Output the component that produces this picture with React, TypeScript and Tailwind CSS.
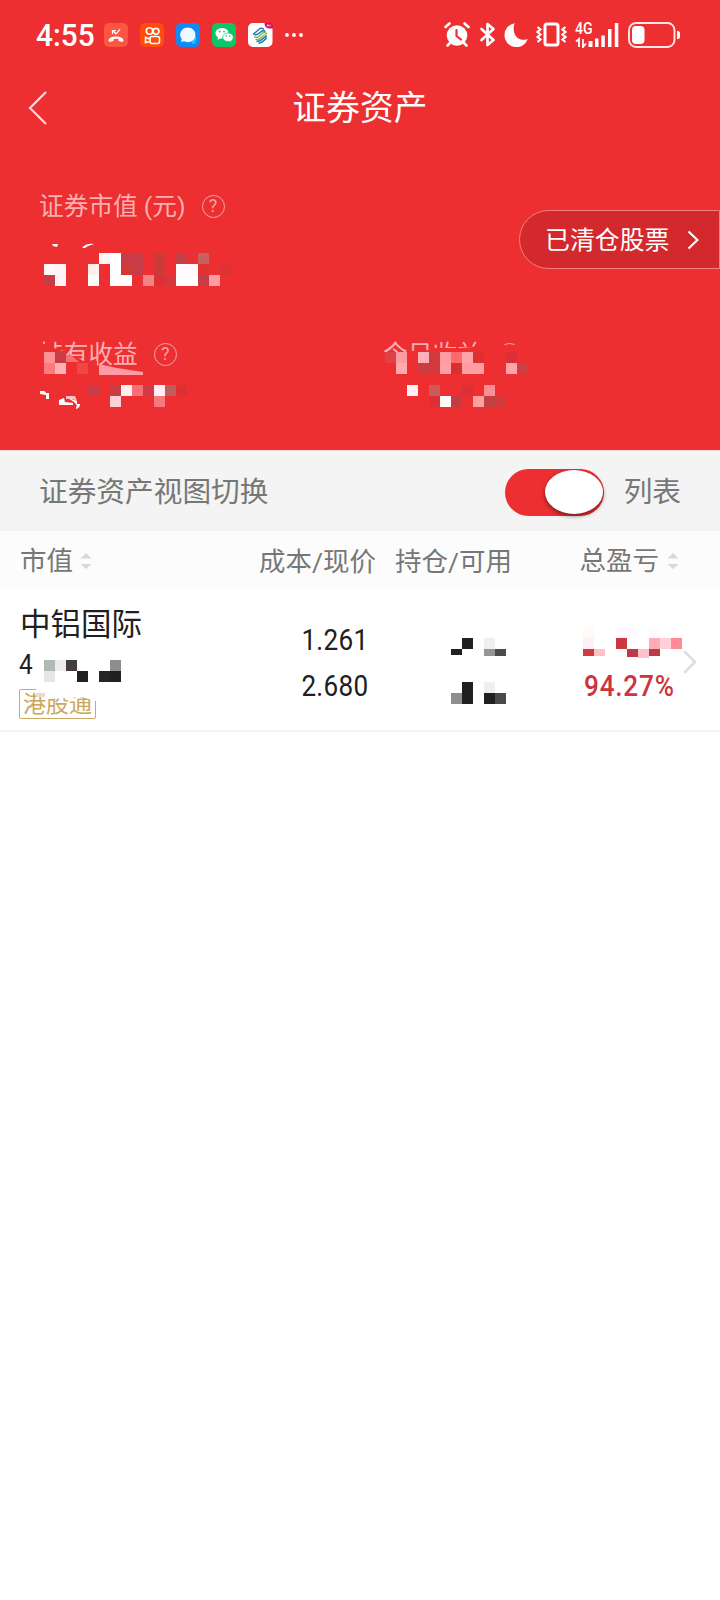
import { ChevronRight } from "lucide-react";

type Cell = [x: number, y: number, color: string, h?: number];

const marketValue: Cell[] = [
  [5, 0, "#fff3f5"], [6, 0, "#ffffff"], [7, 0, "#c73c46"], [8, 0, "#c73c46"], [10, 0, "#cc3a3a"], [12, 0, "#c53d45"], [14, 0, "#c96060"],
  [0, 1, "#fffaf8"], [1, 1, "#fff3f8"], [4, 1, "#fff0ee"], [6, 1, "#ffffff"], [7, 1, "#d23a3a"], [8, 1, "#c73c46"], [10, 1, "#cc3a3a"], [12, 1, "#fff8fc"], [13, 1, "#fff8fc"], [14, 1, "#df3333"], [16, 1, "#dc3434"],
  [0, 2, "#c73c46"], [1, 2, "#fff3f8"], [4, 2, "#fffff8"], [6, 2, "#ffffff"], [7, 2, "#ffffff"], [9, 2, "#f28488"], [10, 2, "#dc3033"], [11, 2, "#d6373c"], [12, 2, "#ffffff"], [13, 2, "#ffffff"], [14, 2, "#c73c46"], [15, 2, "#ff9ca0"],
];

const holdingLabel: Cell[] = [
  [0, 0, "#ff9095"], [1, 0, "#c73c46"],
  [0, 1, "#ff7a80"], [1, 1, "#ffb0b0"], [3, 1, "#f24545"],
];

const holdingProfit: Cell[] = [
  [4, 0, "#c73c46"], [6, 0, "#c73c46"], [7, 0, "#fff0f0"], [8, 0, "#f57078"], [9, 0, "#d23a45"], [10, 0, "#ffeef5"], [11, 0, "#c25c5c"], [12, 0, "#dc3035"],
  [6, 1, "#ffd0d8"], [10, 1, "#f57a80"],
];

const todayLabel: Cell[] = [
  [0, 0, "#e04048"], [1, 0, "#ff9ca0"], [3, 0, "#ffb0b8"], [4, 0, "#d23a3a"], [5, 0, "#ff9ca4"], [6, 0, "#ff6a6c"], [7, 0, "#ffa5aa"], [8, 0, "#dc3035"], [11, 0, "#dc3038"],
  [1, 1, "#ffaab0"], [3, 1, "#cc3c42"], [4, 1, "#d03a3a"], [5, 1, "#ffa0a8"], [6, 1, "#dc3030"], [7, 1, "#ff9ca4"], [8, 1, "#ff9ca4"], [11, 1, "#ffa5aa"], [12, 1, "#cc4040"],
];

const todayProfit: Cell[] = [
  [2, 0, "#fff0f5"], [4, 0, "#cc5a5a"], [7, 0, "#dc3038"], [9, 0, "#f79095"],
  [4, 1, "#dc3035"], [5, 1, "#fffaf8"], [6, 1, "#c73c42"], [8, 1, "#ffa0a0"], [9, 1, "#c24040"], [10, 1, "#d03a3a"],
];

const stockValue: Cell[] = [
  [0, 0, "#b2b8b2"], [1, 0, "#ececec"], [2, 0, "#453c42"], [6, 0, "#8c8f8c"],
  [0, 1, "#e6e6e6"], [3, 1, "#202020"], [5, 1, "#28242a"], [6, 1, "#202020"],
];

const holdAmount: Cell[] = [
  [1, 0, "#202020"], [3, 0, "#efefef"],
  [0, 1, "#202020", 6], [3, 1, "#959795", 7], [4, 1, "#4a4c4a", 7],
];

const availableAmount: Cell[] = [
  [1, 0, "#202020"], [3, 0, "#efefef"],
  [0, 1, "#8c8f8c"], [1, 1, "#202020"], [3, 1, "#202020"], [4, 1, "#4a4a4a"],
];

const profitAmount: Cell[] = [
  [0, 0, "#fffaf5"], [3, 0, "#fffaff"], [4, 0, "#fffaff"], [6, 0, "#fffaff"],
  [0, 1, "#fff0f8"], [3, 1, "#cc3842"], [6, 1, "#ffacb4"], [7, 1, "#ffd0d8"], [8, 1, "#ff8c94"],
  [0, 2, "#d23840", 7], [1, 2, "#ffc0c8", 7], [4, 2, "#b83c4a", 8], [5, 2, "#ffc0c8", 9], [6, 2, "#b83c4a", 7],
];

// Censored number, drawn as 11px blocks
const Mosaic = ({ cells, cols, rows = 2 }: { cells: Cell[]; cols: number; rows?: number }) => (
  <svg width={cols * 11} height={rows * 11} className="block shrink-0" shapeRendering="crispEdges">
    {cells.map(([x, y, color, h = 11]) => (
      <rect key={`${x}-${y}`} x={x * 11} y={y * 11} width="11" height={h} fill={color} />
    ))}
  </svg>
);

const Help = () => (
  <span className="flex h-[23px] w-[23px] items-center justify-center rounded-full border-[1.5px] border-[#f9a3a5] text-[18px] leading-none text-[#f9a3a5]">
    ?
  </span>
);

const Sorter = () => (
  <svg width="12" height="18" viewBox="0 0 12 18" fill="#d8d8d8">
    <path d="M6 1 11.5 6.500H.5zM6 17 .5 12h11z" />
  </svg>
);

const StatusBar = () => (
  <div className="flex h-[69px] items-center pl-9 pr-10 text-white">
    <span className="w-[68px] origin-left scale-x-[0.93] whitespace-nowrap text-[32px] font-medium leading-none">4:55</span>
    <div className="flex gap-3">
      <svg width="24" height="24" viewBox="0 0 24 24" fill="none" stroke="#fff">
        <rect width="24" height="24" rx="5" fill="#fc5541" stroke="none" />
        <path d="M8.500 11V7.500H12M8.800 7.800l3.200 3L16 6.500" strokeWidth="1.200" />
        <path d="M4.500 17.500C5 12 19 12 19.500 17.500L18.500 19l-4-1v-2q-2.500-.7-5 0v2l-4 1z" fill="#fff" stroke="none" />
      </svg>
      <svg width="24" height="24" viewBox="0 0 24 24" fill="none" stroke="#fff" strokeWidth="1.600">
        <rect width="24" height="24" rx="5" fill="#ff4b0b" stroke="none" />
        <circle cx="9.500" cy="8" r="3.200" />
        <circle cx="16" cy="8.300" r="2.900" />
        <rect x="10" y="13.500" width="9.500" height="7" rx="2" />
        <path d="m9.500 16-4-1.500v5l4-1" />
      </svg>
      <svg width="24" height="24" viewBox="0 0 24 24">
        <rect width="24" height="24" rx="5" fill="#1389f5" />
        <path d="M14 14h6q1 3-1 5l1 1.500h-4z" fill="#23c5ff" />
        <path d="M12 4.500a8 7.300 0 1 1-4 13.800L5 19l.8-2.800A8 7.300 0 0 1 12 4.500" fill="#eef9ff" />
      </svg>
      <svg width="24" height="24" viewBox="0 0 24 24">
        <rect width="24" height="24" rx="5" fill="#0ac665" />
        <path d="M10 5c4 0 6.500 2.400 6.500 5.300S14 15.500 10 15.500l-2 0L5.500 17l.5-2.500C1 11 4 5 10 5" fill="#fff" />
        <path d="M16 10c3.200 0 5.200 1.900 5.200 4.300 0 1.500-.7 2.500-1.700 3.200l.4 1.700-1.900-1c-5 .9-7.300-1.400-7.300-3.900 0-2.400 2-4.300 5.300-4.300" fill="#fff" stroke="#0ac665" strokeWidth=".7" />
        <g fill="#0ac665">
          <circle cx="7.700" cy="8.600" r=".9" /><circle cx="12" cy="8.600" r=".9" />
          <circle cx="14.300" cy="13" r=".8" /><circle cx="17.800" cy="13" r=".8" />
        </g>
      </svg>
      <svg width="25" height="24" viewBox="0 0 25 24" fill="none">
        <rect width="24.500" height="24" rx="5" fill="#fff" />
        <path d="M6 13.500q3 2.500 6.500-1.500t6.500-1M7.500 16q3 2 6.500-2t4.500-.5" stroke="#78b843" strokeWidth="1.300" />
        <path d="M5 11.500 12 5.500q2-1 4 1M6.500 11.500q2.500 1 5.500-2t5.500-1M8.500 18q3 1 6-2t4.500-2M10.500 20q3 .5 8-5" stroke="#1675b7" strokeWidth="1.400" />
        <path d="M16.500 0H22q3 0 3 5.500h-4q-4.500-.5-4.500-5.500" fill="#d90879" />
        <path d="m19 3.500 1-2 1 2m1.200-2v2" stroke="#fff" strokeWidth=".7" />
      </svg>
    </div>
    <svg width="20" height="6" viewBox="0 0 20 6" fill="#fff" className="ml-[11px]">
      <circle cx="3" cy="3" r="1.900" /><circle cx="10" cy="3" r="1.900" /><circle cx="17" cy="3" r="1.900" />
    </svg>

    <div className="ml-auto flex items-center">
      <svg width="26" height="25" viewBox="0 0 26 25" fill="none" stroke="#fff" strokeLinecap="round">
        <circle cx="13" cy="13.500" r="10.300" fill="#fff" stroke="none" />
        <path d="m1.500 5 4-3.500m19 3.500-4-3.500M6 21l-2.500 2.500M20 21l2.500 2.500" strokeWidth="2.600" />
        <path d="M12.500 8v6l4.500 3.500" stroke="#ed2f32" strokeWidth="2.200" />
      </svg>
      <svg width="17" height="25" viewBox="0 0 17 25" fill="none" stroke="#fff" strokeWidth="2.700" strokeLinejoin="round" strokeLinecap="round" className="ml-[9px]">
        <path d="m2.500 7 12 11-6 5V2l6 5-12 11" />
      </svg>
      <svg width="24" height="24" viewBox="0 0 24 24" fill="#fff" className="ml-[8px]">
        <path d="M10.500.3A12 12 0 1 0 23.800 16C15 19.500 7 12 10.500.3" />
      </svg>
      <svg width="31" height="25" viewBox="0 0 31 25" fill="none" stroke="#fff" className="ml-[8px]">
        <rect x="9" y="2" width="13" height="21" rx="2" strokeWidth="3" />
        <path d="m1.500 5 3 2.500-3 2.500 3 2.500-3 2.500 3 2.500-3 2.500M29.500 5l-3 2.500 3 2.500-3 2.500 3 2.500-3 2.500 3 2.500" strokeWidth="2.200" />
      </svg>
      <div className="relative ml-2 h-[26px] w-[44px]">
        <span className="absolute left-0 top-0 origin-left scale-x-[0.88] text-[16px] font-medium leading-[14px]">4G</span>
        <svg width="44" height="26" viewBox="0 0 44 26" fill="#fff">
          <path d="M13.500 19h4v6h-4zM20 16.500h3.500V25H20zM26.300 13.500h3.500V25h-3.500zM33 7h3.500v18H33zM39.800 1h3.500v24h-3.500z" />
          <path d="M1 19.500 4 17v8M8 17v8l3-3.500" fill="none" stroke="#fff" strokeWidth="1.800" />
        </svg>
      </div>
      <svg width="52" height="26" viewBox="0 0 52 26" fill="#fff" className="ml-[9px]">
        <rect x="1" y="1" width="45.500" height="24" rx="7" fill="none" stroke="#ffe7e7" strokeWidth="1.900" />
        <rect x="4" y="4" width="12.500" height="18" rx="4" />
        <path d="M49 9q3 0 3 2v4q0 2-3 2z" />
      </svg>
    </div>
  </div>
);

const Summary = () => (
  <section className="relative h-[303px] pl-[39px] pt-[45px] text-[24.7px] text-[#f9b0b1]">
    <div className="flex h-7 items-center leading-7">
      <span className="pt-[2px]">证券市值 (元)</span>
      <span className="ml-[16px] flex"><Help /></span>
    </div>
    <svg width="60" height="5" className="ml-3 mt-[23px] block" fill="#fff">
      <path d="M1 1h6l-1 3-4-1zM31 5q4-5 12-4l-6 2-3 2z" />
    </svg>
    <div className="ml-[5px] mt-[5px]">
      <Mosaic cells={marketValue} cols={17} rows={3} />
    </div>

    <div className="mt-[54px] grid grid-cols-[344px_1fr]">
      <div className="relative">
        <div className="flex h-7 items-center leading-7">
          <span className="pt-[2px]">持有收益</span>
          <span className="ml-[16px] flex"><Help /></span>
        </div>
        <svg width="120" height="40" className="absolute left-0 top-0">
          <path d="M0 0h3v4h8V0h4v8l9 3 6 7 8-1 6 4h14v14H0z" fill="#ed2f32" />
          <path d="m27 15 5 0 8 7h-13z" fill="#f47075" />
          <path d="m60 24 18 4 26 4v3H60z" fill="#ff9ba4" />
        </svg>
        <div className="absolute left-[5px] top-[12px]">
          <Mosaic cells={holdingLabel} cols={4} />
        </div>
      </div>
      <div className="relative">
        <div className="flex h-7 items-center leading-7">
          <span className="pt-[2px]">今日收益</span>
          <span className="ml-[16px] flex"><Help /></span>
        </div>
        <svg width="160" height="32" className="absolute left-0 top-0">
          <path d="M0 17h26v-6l22-1V8h30l32-3h50v27H0z" fill="#ed2f32" />
        </svg>
        <div className="absolute left-[2px] top-[12px]">
          <Mosaic cells={todayLabel} cols={13} />
        </div>
      </div>
      <div className="relative ml-[5px] mt-[17px]">
        <Mosaic cells={holdingProfit} cols={13} />
        <svg width="44" height="18" className="absolute -left-[5px] top-[6px]" fill="#fff">
          <path d="M1 0q5-1 6 2h3v6H7V4L1 3zM20 9l5-2 1 4 8 1v2H20zM37 13h4q0 4-4 5v-2l1-1z" />
          <path d="M27 5h9l2 5q-5-3-11-2z" fill="#ffc4ca" />
          <path d="m29 7 9 3v4l-3-3z" />
        </svg>
      </div>
      <div className="ml-[2px] mt-[17px]">
        <Mosaic cells={todayProfit} cols={11} />
      </div>
    </div>

    <button className="absolute right-0 top-[63px] flex h-[59px] w-[201px] items-center rounded-l-full border border-[#f37f80] bg-[#d3292c] pl-[25px] text-[24.900px] text-white">
      <span className="pt-[2px]">已清仓股票</span>
      <svg width="12" height="20" viewBox="0 0 12 20" fill="none" stroke="#fff" strokeWidth="2.200" className="ml-[18px] shrink-0">
        <path d="m1.500 1.500 9 8.500-9 8.500" />
      </svg>
    </button>
  </section>
);

const StockRow = () => (
  <div className="flex h-[143px] border-b-2 border-[#f4f4f4] text-[#202020]">
    <div className="w-[240px] pl-[19px] pt-[16px]">
      <div className="pl-[1px] text-[30.5px] leading-[40px]">中铝国际</div>
      <div className="flex h-[44px] pt-[5px]">
        <span className="w-[25px] origin-left scale-x-90 text-[27px] leading-[30px]">4</span>
        <span className="pt-[10px]"><Mosaic cells={stockValue} cols={7} /></span>
      </div>
      <div className="relative flex h-[30px] w-[77px] items-center justify-center rounded-[2px] border-[1.5px] border-[#c9aa62] text-[23px] leading-none text-[#cba75b]">
        <span className="whitespace-nowrap">港股通</span>
        <svg width="62" height="16" className="absolute -top-[3px] right-[-3px]" fill="#fff">
          <path d="M0 0h62v14h-5l-4-2-8-2-15 1-18 1-3-5H0z" />
          <path d="M0 6h9v4H0z" fill="#e8dccb" />
        </svg>
      </div>
    </div>
    <div className="flex w-[128px] flex-col items-end pt-[28px] text-[29px] leading-[46px] tracking-[0.3px]">
      <span className="origin-right scale-x-[0.9]">1.261</span>
      <span className="origin-right scale-x-[0.9]">2.680</span>
    </div>
    <div className="flex w-[138px] flex-col items-end gap-[22px] pt-[49px]">
      <Mosaic cells={holdAmount} cols={5} />
      <Mosaic cells={availableAmount} cols={5} />
    </div>
    <div className="w-[176px] pl-[77px] pt-[38px]">
      <Mosaic cells={profitAmount} cols={9} rows={3} />
      <div className="ml-[1px] mt-[3px] origin-left scale-x-[0.9] text-[29px] font-medium leading-[46px] tracking-[0.9px] text-[#cd343c]">94.27%</div>
    </div>
    <ChevronRight className="-ml-[12px] mt-[53px] h-[40px] w-[40px] shrink-0 text-[#dddddd]" strokeWidth={1.5} />
  </div>
);

const App = () => {
  return (
    <div className="min-h-[1600px] w-[720px] overflow-hidden bg-white font-[Roboto,'Noto_Sans_CJK_SC',sans-serif]">
      <header className="h-[450px] bg-[#ed2f32]">
        <StatusBar />
        <div className="grid h-[78px] grid-cols-[80px_1fr_80px] items-center text-white">
          <svg width="20" height="34" viewBox="0 0 20 34" fill="none" stroke="#ffdada" strokeWidth="2.200" className="ml-7">
            <path d="M18 1 2 17l16 16" />
          </svg>
          <h1 className="pt-[2px] text-center text-[33.7px] leading-none">证券资产</h1>
        </div>
        <Summary />
      </header>

      <div className="flex h-[81px] items-center border-t border-[#f9dada] bg-[#f4f4f4] pl-[39px] pr-[39px] text-[28.7px] text-[#777]">
        <span className="pt-[4px]">证券资产视图切换</span>
        <div className="ml-auto mr-5 mt-[2px] flex h-[47px] w-[99px] items-center justify-end rounded-full bg-[#ed2f32] pr-[1px]">
          <span className="h-[44px] w-[58px] rounded-[50%] bg-white shadow-[0_2px_4px_rgba(0,0,0,0.5)]" />
        </div>
        <span className="pt-[4px]">列表</span>
      </div>

      <div className="flex h-[58px] items-center bg-[#fcfcfc] pt-[2px] text-[26.500px] text-[#777]">
        <div className="flex w-[240px] items-center gap-[7px] pl-[20px]">市值 <Sorter /></div>
        <div className="w-[136px] pt-px text-right">成本/现价</div>
        <div className="w-[136px] pt-px text-right">持仓/可用</div>
        <div className="ml-auto flex items-center gap-[8px] pr-[41px]">总盈亏 <Sorter /></div>
      </div>

      <StockRow />
    </div>
  );
};

export default App;
